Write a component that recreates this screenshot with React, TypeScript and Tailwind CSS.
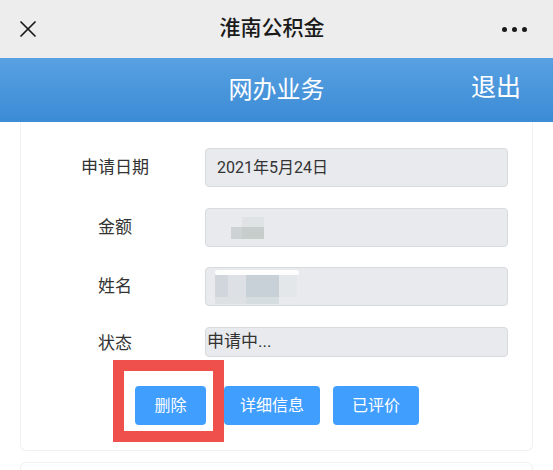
import { X } from 'lucide-react'

const FONT = { fontFamily: 'Roboto, "Noto Sans CJK SC", "Noto Sans", sans-serif' }

function Field({ label, children, short }: { label: string; children?: React.ReactNode; short?: boolean }) {
  return (
    <div className="flex items-center">
      <div className={`w-[170px] pl-[18px] text-center text-[17px] text-[#333] ${short ? 'pt-[4px]' : ''}`}>{label}</div>
      <div
        className={`ml-[14px] w-[303px] flex items-center rounded-[4px] border border-[#d8dbde] bg-[#e8eaed] ${short ? 'h-[30px]' : 'h-[39px] pl-[11px]'}`}
      >
        {children}
      </div>
    </div>
  )
}

export default function App() {
  return (
    <div className="w-[553px] h-[470px] overflow-hidden bg-white" style={FONT}>
      {/* WeChat title bar */}
      <div className="h-[58px] bg-[#ededed] flex items-center justify-between pl-[14px] pr-[16px]">
        <X size={28} strokeWidth={1.5} className="text-[#1c1c1c]" />
        <div className="text-[21px] font-medium text-[#1a1a1a]">淮南公积金</div>
        <div className="flex gap-[5px] pr-[10px]">
          <span className="w-[5px] h-[5px] rounded-full bg-[#1a1a1a]" />
          <span className="w-[5px] h-[5px] rounded-full bg-[#1a1a1a]" />
          <span className="w-[5px] h-[5px] rounded-full bg-[#1a1a1a]" />
        </div>
      </div>

      {/* Blue header */}
      <div className="relative h-[64px] bg-gradient-to-b from-[#58a1e2] to-[#3b8bd5] flex items-center justify-center">
        <span className="text-[24px] text-white">网办业务</span>
        <span className="absolute right-[32px] top-[11px] text-[25px] text-white">退出</span>
      </div>

      {/* Card */}
      <div className="relative mx-[20px] rounded-b-[6px] border border-t-0 border-[#f0f1f3] bg-white pt-[26px] pb-[25px]">
        <div className="flex flex-col gap-[21px]">
          <Field label="申请日期">
            <span className="text-[16px] text-[#333]">2021年5月24日</span>
          </Field>
          <Field label="金额">
            <div className="ml-[14px] flex items-end">
              <div className="w-[11px] h-[12px] bg-[#cdd3d2]" />
              <div className="flex flex-col">
                <div className="w-[22px] h-[10px] bg-[#dfe3e4]" />
                <div className="w-[22px] h-[12px] bg-[#c6cdcb]" />
              </div>
            </div>
          </Field>
          <div className="-mt-[1px]">
            <Field label="姓名">
              <div className="-ml-[2px] flex flex-col">
                <div className="w-[84px] h-[5px] bg-white/90 rounded-full" />
                <div className="flex">
                  <div className="w-[13px] h-[22px] bg-[#d0d6db]" />
                  <div className="w-[18px] h-[22px] bg-[#dde1e5]" />
                  <div className="w-[33px] h-[22px] bg-[#c9d1d8]" />
                  <div className="w-[18px] h-[22px] bg-[#e3e7ea]" />
                </div>
                <div className="flex">
                  <div className="w-[31px] h-[7px] bg-[#dde1e4]" />
                  <div className="w-[33px] h-[7px] bg-[#d6dde1]" />
                </div>
              </div>
            </Field>
          </div>
          <Field label="状态" short>
            <span className="pl-[1px] text-[17px] text-[#333]">申请中...</span>
          </Field>
        </div>

        <div className="mt-[29px] flex pl-[114px]">
          <button className="w-[71px] h-[39px] rounded-[4px] bg-[#409eff] text-[16px] text-white">删除</button>
          <button className="ml-[18px] w-[96px] h-[39px] rounded-[4px] bg-[#409eff] text-[16px] text-white">详细信息</button>
          <button className="ml-[13px] w-[86px] h-[39px] rounded-[4px] bg-[#409eff] text-[16px] text-white">已评价</button>
        </div>

        {/* annotation box */}
        <div className="absolute left-[92px] top-[238px] w-[111px] h-[82px] border-[11px] border-[#f0504b]" />
      </div>

      {/* next card */}
      <div className="mx-[20px] mt-[11px] h-[40px] rounded-t-[6px] border border-[#f0f1f3] bg-white" />
    </div>
  )
}
